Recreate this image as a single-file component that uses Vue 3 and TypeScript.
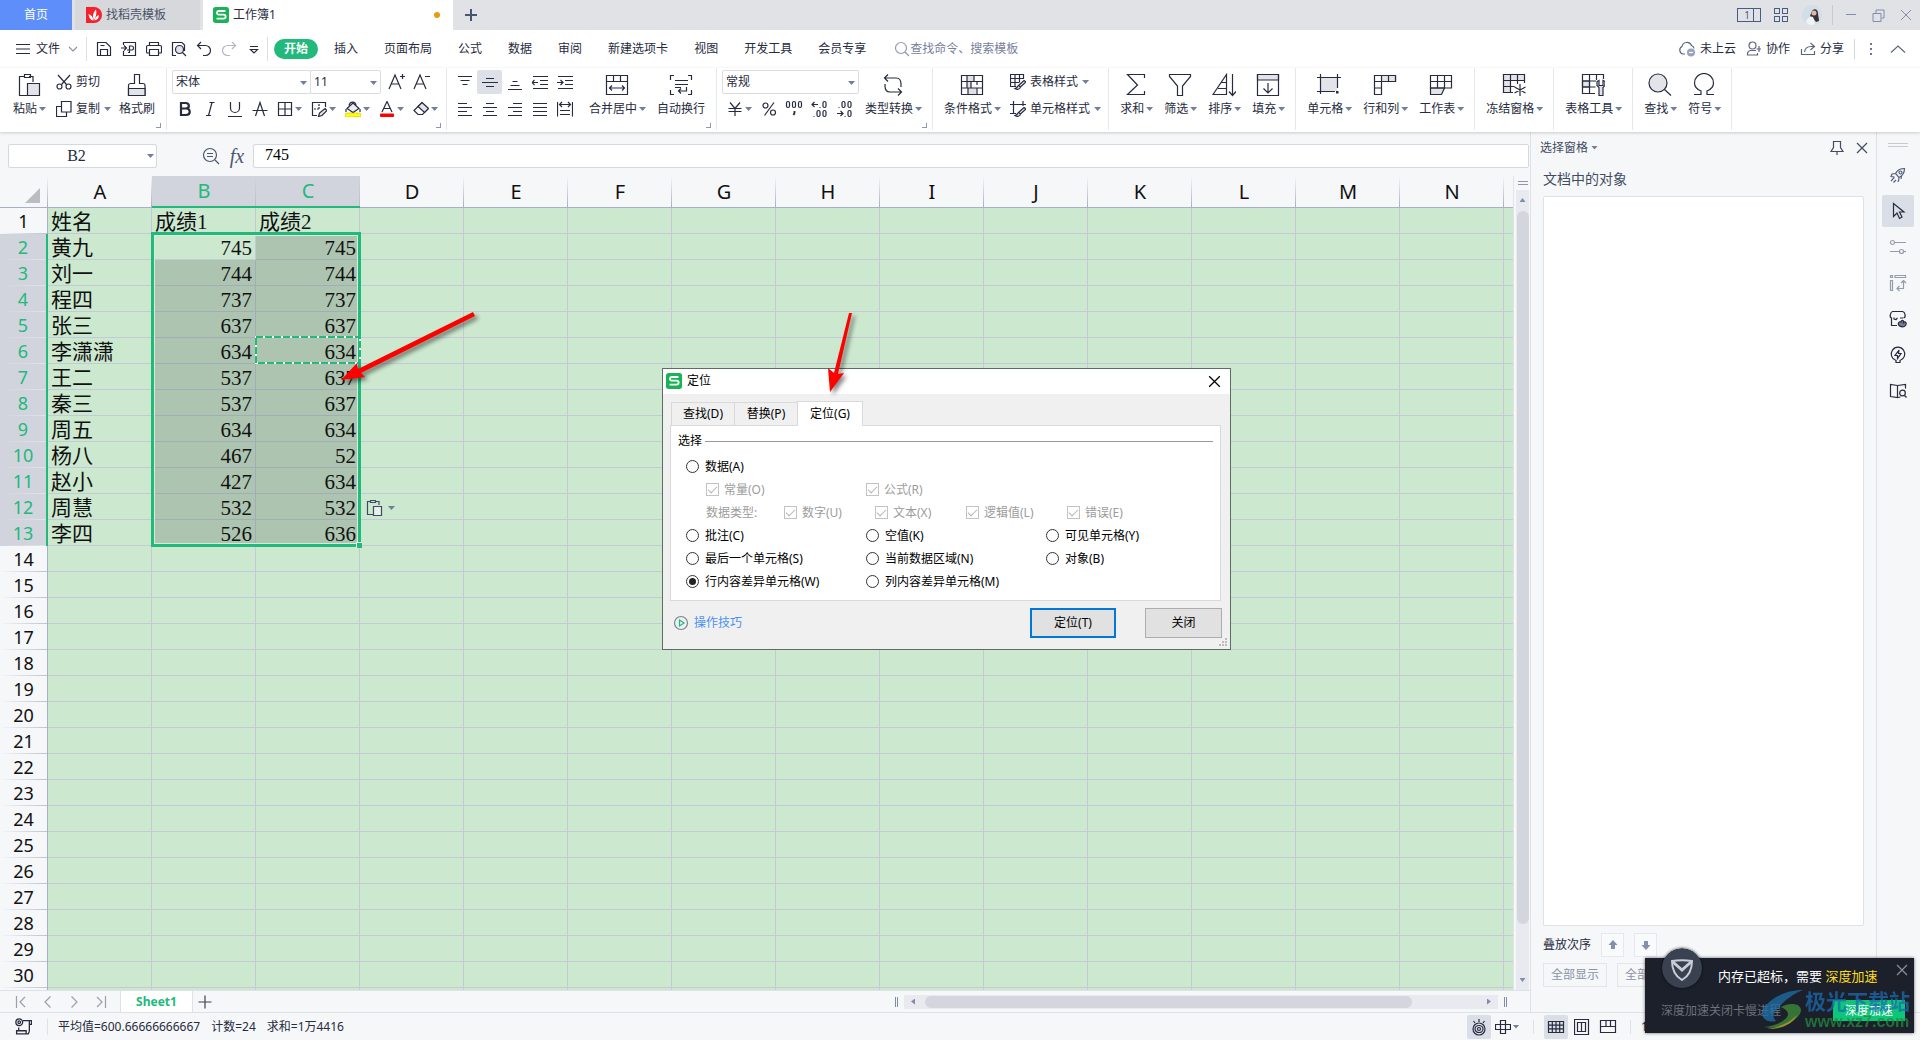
<script setup lang="ts">
import { h, ref } from 'vue'

const icons: Record<string, [number, string]> = {
  menu: [16, '<path d="M1 3.5h14M1 8h14M1 12.5h14"/>'],
  chev: [10, '<path d="M1 3l4 4 4-4"/>'],
  save: [16, '<path d="M1.5 1.500h8.500l4.500 4.500v8.500h-13z"/><path d="M4.500 14.500V8.500h7v6M4.500 4.500h4"/>'],
  exportPdf: [16, '<path d="M2.500 4V1.500h12v13h-12V10M0 7h5M3 4.500L5.500 7 3 9.500M7 11.500h1.500V5h2.500c2 0 2 4 0 4H6"/>'],
  print: [16, '<path d="M3.500 4.500v-3h9v3M3.500 12h-2a1 1 0 0 1-1-1V6a1.500 1.500 0 0 1 1.500-1.500h12A1.500 1.500 0 0 1 15.500 6v5a1 1 0 0 1-1 1h-2M3.500 8.500h9v6h-9z"/>'],
  preview: [16, '<path d="M5 14.500H1.500v-13h9.500l2.500 2.500v6"/><circle cx="8.500" cy="8.500" r="4" fill="#e2e4ea"/><path d="M11.500 11.500l3.500 3.500"/>'],
  undo: [16, '<path d="M5 1L1.500 4.500 5 8M2 4.500h7.500a4.500 4.500 0 0 1 0 10H7"/>'],
  redo: [16, '<path d="M11 1l3.500 3.500L11 8M14 4.500H6.500a4.500 4.500 0 0 0 0 10H9" stroke="#b4b8c4"/>'],
  more: [16, '<path d="M4 5.500h8M4.500 8.500L8 12l3.500-3.500z"/>'],
  search: [16, '<circle cx="7" cy="7" r="5.500"/><path d="M11 11l4 4"/>'],
  cloud: [18, '<path d="M7 14H5A4 4 0 0 1 4 6.500a5 5 0 0 1 9.500-1 4 4 0 0 1 2.500 3"/><circle cx="13" cy="12.500" r="4" fill="#98a3bd" stroke="none"/><path d="M11 12.500h4" stroke="#fff"/>'],
  person: [16, '<circle cx="6.500" cy="4.500" r="3.500"/><path d="M10 9.500H5a3.500 3.500 0 0 0-3.500 3v1.500h10v-2M13 5v6M10.500 8H15"/>'],
  share: [16, '<path d="M1.500 8v5.500h13V10M10.500 2l4 3.500-4 3.500M14 5.500h-3C7 5.500 5 7.500 4.500 11"/>'],
  up: [16, '<path d="M1 11.500l7-6.500 7 6.500"/>'],
  dots: [16, '<path d="M7 2h2v2H7zM7 7h2v2H7zM7 12h2v2H7z" fill="#6b7690" stroke="none"/>'],
  paste: [24, '<path d="M8 3.500H2.500v19H10M16 9V3.500h-4"/><path d="M7.500 1.500h6v3h-6z"/><path d="M10.500 10.500h12v12h-12z" fill="#e2e4e9"/>'],
  pasteOpt: [18, '<path d="M6 2.500H2.500v13H8M14 6V2.500h-3.500M5.500 1.500h5v2h-5z"/><path d="M8.500 7.500h8v9h-8z" fill="#e6f2e8"/>'],
  cut: [16, '<path d="M2 1l8.500 9.500M14 1L5.500 10.500"/><circle cx="3.500" cy="12.500" r="2.500"/><circle cx="12.500" cy="12.500" r="2.500"/>'],
  copy: [16, '<path d="M5 5.500H.500v10h10V11"/><path d="M5.500.500h9.500v10.500H5.500z"/>'],
  brush: [24, '<path d="M9.500 10.500v-9h5v9h3.500a2 2 0 0 1 2 2v10H3.500v-10a2 2 0 0 1 2-2z"/><path d="M3.500 15.500H20v7H3.500z" fill="#e2e4e9"/>'],
  fontUp: [18, '<path d="M1 16L7 2l6 14M3.500 11h7M12 3.500h5M14.500 1v5"/>'],
  fontDown: [18, '<path d="M1 16L7 2l6 14M3.500 11h7M12 3.500h5"/>'],
  bold: [16, '<path d="M4 2h4.500c4.500 0 4.500 5.500 0 5.500H4zM4 7.500h5c5 0 5 6.500 0 6.500H4z" stroke-width="2.200"/>'],
  italic: [16, '<path d="M7.500 1.500h5M4 14.500h5M10 1.500l-3.500 13"/>'],
  underline: [16, '<path d="M3.500 1v6a4.500 4.500 0 0 0 9 0V1M1 15.500h14"/>'],
  strike: [16, '<path d="M3.500 15L8 1.500 12.500 15M.500 9.500h15"/>'],
  border: [16, '<path d="M1.500 1.500h13v13h-13zM8 1.500v13M1.500 8h13"/>'],
  cellStyle: [16, '<path d="M6 14.500H1.500v-13h13V6"/><path d="M3 8h6M8 3v6" stroke-dasharray="2 1"/><path d="M14 7.500l2 2-5 5-3.500 1 1-3.500z" fill="#e2e4e9"/>'],
  fill: [16, '<path d="M2 7.500L8 2l6 5.500-6 4z" fill="#eceef2"/><path d="M4 4.500C5 0 10 0 11 4"/><path d="M1 8v3M15 8v3"/><rect x="0" y="12" width="16" height="4" rx="1.500" fill="#ff0" stroke="#b9a800" stroke-width=".5"/>'],
  fontColor: [16, '<path d="M3 11L8 .500 13 11M5 7.500h6"/><rect x="1" y="12.500" width="14" height="3.500" rx="1" fill="#f00" stroke="none"/>'],
  eraser: [16, '<path d="M1 9.500L9 1.500l6.500 6-6 6H5z"/><path d="M5 5.500L9 1.500l6.500 6-4 4z" fill="#e2e4e9"/>'],
  alTop: [16, '<path d="M1 2.500h14M3.500 6.500h9M5.500 10.500h5"/>'],
  alMid: [16, '<path d="M4 4.500h8M0 8.500h16M4 12.500h8"/>'],
  alBot: [16, '<path d="M5.500 7.500h5M3.500 11.500h9M1 15.500h14"/>'],
  outdent: [16, '<path d="M1 2.500h15M8 6.500h8M8 10.500h8M1 14.500h15M0 8.500h6M2.500 6L0 8.500 2.500 11"/>'],
  indent: [16, '<path d="M1 2.500h15M8 6.500h8M8 10.500h8M1 14.500h15M0 8.500h6M3.500 6L6 8.500 3.500 11"/>'],
  left: [16, '<path d="M1 2.500h9M1 6.500h14M1 10.500h9M1 14.500h14"/>'],
  center: [16, '<path d="M4 2.500h8M1 6.500h14M4 10.500h8M1 14.500h14"/>'],
  right: [16, '<path d="M6 2.500h9M1 6.500h14M6 10.500h9M1 14.500h14"/>'],
  justify: [16, '<path d="M1 2.500h14M1 6.500h14M1 10.500h14M1 14.500h14"/>'],
  distribute: [16, '<path d="M.500 1v14.500M15.500 1v14.500M3 3.500h10M5 1L2.500 3.500 5 6M11 1l2.500 2.500L11 6M3 9.500h10M3 13.500h10"/>'],
  merge: [24, '<path d="M1.500 2.500h21v19h-21zM1.500 8.500h21M8.500 2.500v6M15.500 2.500v6M4.500 15h15M7 12.500L4.500 15 7 17.500M17 12.500l2.500 2.500-2.500 2.500"/>'],
  wrap: [24, '<path d="M5 2.500H1.500V7M19 2.500h3.500V7M5 21.500H1.500V17M19 21.500h3.500V17M6 7.500h13M6 11.500h13M6 14.500h6M17.500 14v4h-8M12 15.500L9.500 18l2.500 2.500"/>'],
  yen: [16, '<path d="M3 1.500L8 7.500l5-6M1.500 7.500h13M1.500 10.500h13M8 7.500V15"/>'],
  percent: [16, '<circle cx="4.500" cy="4.500" r="2.500"/><circle cx="12" cy="11.500" r="2.500"/><path d="M13 1.500L3.500 14.500"/>'],
  thousand: [18, '<rect x="1.500" y="1.500" width="3" height="6" rx="1.500"/><rect x="7.500" y="1.500" width="3" height="6" rx="1.500"/><rect x="13.500" y="1.500" width="3" height="6" rx="1.500"/><path d="M9.500 11v2l-1 2" stroke-width="1.800"/>'],
  decUp: [18, '<path d="M2 4.500h6M4.500 2L2 4.500 4.500 7M9.500 7.500h1M3.500 16.500h1"/><rect x="13" y="1.500" width="3" height="6" rx="1.500"/><rect x="7" y="10.500" width="3" height="6" rx="1.500"/><rect x="13" y="10.500" width="3" height="6" rx="1.500"/>'],
  decDown: [18, '<path d="M2 13.500h6M5.500 11L8 13.500 5.500 16M9.500 16.500h1M3.500 7.500h1"/><rect x="7" y="1.500" width="3" height="6" rx="1.500"/><rect x="13" y="1.500" width="3" height="6" rx="1.500"/><rect x="13" y="10.500" width="3" height="6" rx="1.500"/>'],
  convert: [24, '<path d="M7 1.500L3.500 5 7 8.500M4 5h11c4 0 5 3 5 6v3M17 15.500l3.500 3.500-3.500 3.500M20 19H9c-4 0-5-3-5-6v-2"/>'],
  cond: [24, '<path d="M7 2.500h7v6H7zM7 8.500h4v6H7zM8 15h8v6.500H8z" fill="#dfe1e6" stroke="none"/><path d="M1.500 2.500h21v19h-21zM1.500 8.500h21M1.500 15h21M7 2.500V15M14 2.500v6M11 8.500V15M17 15v6.500M8 15v6.500M17 8.500V12"/>'],
  tableStyle: [16, '<path d="M6 12.500H.500v-12h13V5M.500 4.500h13M.500 8.500H9M5 .500v12M9.500.500v8"/><path d="M14 6.500l2 1.500-5.500 5-2-1.500zM9 11.500c-2 0-1 2.500-4 3 2 1.500 5 1 5.500-1.500" fill="#e2e4e9"/>'],
  unitStyle: [16, '<path d="M0 3.500h16M3.500 0v13M0 12.500h6M13 0v5"/><path d="M14 6.500l2 1.500-5.500 5-2-1.500zM9 11.500c-2 0-1 2.500-4 3 2 1.500 5 1 5.500-1.500" fill="#e2e4e9"/>'],
  sum: [24, '<path d="M20.500 5V1.500h-17L13.500 12 3.500 21.500h17V18"/>'],
  filter: [24, '<path d="M1.500 1.500h21v2L14.500 13v9.500h-5V13L1.500 3.500z"/>'],
  sort: [24, '<path d="M1 21.500L14.500 1.500v20zM9 9.500h5.500M6 15.500h8.500M20.500 1v21M17 18.500l3.500 4 3.500-4"/>'],
  fillDown: [24, '<path d="M1.500 1.500h21V7h-21z" fill="#e2e4e9"/><path d="M1.500 1.500h21v21h-21zM12 10v10M7.500 15.500L12 20l4.500-4.500"/>'],
  cell: [24, '<path d="M4 5h16v13H4z" fill="#e2e4e9" stroke="none"/><path d="M0 4.500h24M0 18.500h18M3.500 1v20M20.500 1v14"/><path d="M19 18h2.500v2.500H19z" fill="#262b40" stroke="none"/>'],
  rowcol: [24, '<path d="M1.500 2.500h21v6H8.500v13h-7z" /><path d="M8.500 2.500h14v6h-14z" fill="#e2e4e9"/><path d="M1.500 8.500h7M1.500 15h7M15.500 2.500v6"/>'],
  sheet: [24, '<path d="M1.500 15h14l-3 6.500h-11z" fill="#e2e4e9"/><path d="M1.500 2.500h21V15h-21zM1.500 8.500h21M8.500 2.500V15M15.500 2.500V15"/>'],
  freeze: [24, '<path d="M1.500 1.500h21v6H8.500v12h-7z" fill="#e2e4e9"/><path d="M1.500 7.500h21M1.500 13.500h7M8.500 1.500v6M15.500 1.500v6M22.500 7.500V10M15.500 7.500V11M8.500 13.500h4M1.500 19.500H11M18 11v12M12.500 14l11 6M23.500 14l-11 6"/>'],
  tools: [24, '<path d="M1.500 8h7v6h-7z" fill="#e2e4e9"/><path d="M14 20.500H1.500v-19h21V6M1.500 8H15M1.500 14h13M8.500 1.500v19M15.500 1.500V7"/><path d="M16 8.500v4l2 2v8h4v-8l2-2v-4l-2-1v5h-4v-5z" fill="#e2e4e9"/>'],
  find: [24, '<circle cx="10" cy="10" r="9" fill="#e2e4e9"/><path d="M16.500 16.500l6.500 6"/>'],
  omega: [24, '<path d="M2 21.500h7V18C4 16 2.500 13 2.500 10a9.500 9.500 0 0 1 19 0c0 3-1.500 6-6.500 8v3.500h7"/>'],
  zoomOut: [18, '<circle cx="8" cy="8" r="6.500"/><path d="M5 6.500h6M5 9.500h6M13 13l4 4"/>'],
  pin: [16, '<path d="M4.500 1.500h7v6l2.500 4H2l2.500-4zM8 11.500V15"/>'],
  close: [16, '<path d="M3 3l10 10M13 3L3 13"/>'],
  rocket: [18, '<path d="M15.500 2.500c-5 0-7.500 2-9 5l3.500 4c4-2 5.500-4.500 5.500-9zM6.500 7.500L3 8l-1 2.500 3.500.5M10 11.500l-.500 3.500-1 .500M12 13l.500-3M4 13l-2 2M7 14l-2.500 2.500M5.500 11.500L3.500 13"/><circle cx="11.500" cy="6.500" r="1.500"/>'],
  pointer: [18, '<path d="M4.500 1.500v13l3.500-3.500 2.500 5.500 2.500-1.500-2.500-5h4.500z"/>'],
  sliders: [18, '<circle cx="3.500" cy="4.500" r="2"/><path d="M5.500 4.500H17M1 13.500h9.500"/><circle cx="12.500" cy="13.500" r="2"/><path d="M14.500 13.500H17"/>'],
  swap: [18, '<path d="M1.500 1.500h2v2h-2zM6 1.500h10.500v2H6zM1.500 6.500h2v10h-2zM14.500 6.500v8H8M12 9l2.500-2.500L17 9M10.500 12L8 14.500l2.500 2.500"/>'],
  shop: [18, '<path d="M8 15.500H2.500V8C0 7 1.500 2 3.500 1.500h10c2.500.500 4 5.500 1 6.500M5 7.500V9l2 .500L8.500 8M11 8h3"/><path d="M10 15.500c-2-2.500 1-5 2-3 0-3 3-3 2.500 0 2-2 3.500 1 2 3s-5 1.500-6.500 0z" fill="#777d8e"/>'],
  bulb: [18, '<path d="M7 14.500A6.800 6.800 0 1 1 11 14.500v2H7z"/><path d="M10 4L6 9.500h2.500v3l3.500-5H9.500z"/>'],
  book: [18, '<path d="M8.500 3.500L1.500 2.500v12l7 1zM8.500 3.500l8-1v4M8.500 15.500l3-.500"/><circle cx="13.500" cy="11" r="2.800"/><path d="M15.500 13.500l2 2"/>'],
  first: [14, '<path d="M1.500 1v12M10 2L5 7l5 5"/>'],
  prev: [14, '<path d="M9.500 1.500L4 7l5.500 5.500"/>'],
  next: [14, '<path d="M4.500 1.500L10 7l-5.500 5.500"/>'],
  last: [14, '<path d="M12.500 1v12M4 2l5 5-5 5"/>'],
  plus: [14, '<path d="M7 .500v13M.500 7h13"/>'],
  newTab: [14, '<path d="M7 1v12M1 7h12" stroke-width="2"/>'],
  macro: [16, '<circle cx="4" cy="4" r="3.200"/><circle cx="4" cy="4" r="1.200"/><path d="M7.500 2.500h8V6H13M13.500 2.500v10M3.500 9v2.500M1.500 12h9v3h-9zM10.500 15h2l1-2.500"/>'],
  eye: [18, '<path d="M9 1v3M3.500 3l1.500 2M14.500 3L13 5"/><circle cx="9" cy="11" r="6"/><ellipse cx="9" cy="11" rx="4" ry="3.500"/><circle cx="9" cy="11" r="1.500"/>'],
  cross: [16, '<path d="M5.500 1.500h5v13h-5zM.500 5.500h15v5H.500z"/>'],
  vGrid: [18, '<path d="M1.500 3.500h15v11h-15zM1.500 7.200h15M1.500 10.800h15M5.300 3.500v11M9 3.500v11M12.700 3.500v11"/>'],
  vPage: [16, '<path d="M.500.500h14v15H.500zM3.500 3.500h8v9h-8zM7.500 3.500v9"/>'],
  vBreak: [18, '<path d="M1.500 2.500h15v12h-15zM7 2.500v6h9.500M11.500 2.500v6M1.500 8.500H7"/>'],
  arrowUp: [12, '<path d="M6 1l4.500 5H8v4H4V6H1.500z" fill="#8590ac" stroke="none"/>'],
  arrowDown: [12, '<path d="M6 11l4.500-5H8V2H4v4H1.500z" fill="#8590ac" stroke="none"/>'],
  play: [16, '<circle cx="8" cy="8" r="6.500" stroke="#7b8493"/><path d="M6.500 5l4.500 3-4.500 3z" stroke="#1fb97b"/>'],
  logo: [18, '<rect x="0" y="0" width="18" height="18" rx="3" fill="#17b355" stroke="none"/><path d="M14 4.500H6A1.800 1.800 0 0 0 4.500 6.200 1.800 1.800 0 0 0 6 8.500h6a2 2 0 0 1 0 4.500H4" stroke="#fff" stroke-width="2"/>'],
  daoke: [16, '<path d="M0 0h8a8 8 0 0 1 0 16H0z" fill="#f5222d" stroke="none"/><path d="M8 13C6 9 7.500 5 10 2.500c1 4 0 7-2 10.500zM7.500 13.500C4 13 3 10 2.500 7c3 1 4.500 3 5 6.500zM8.500 13.500c.500-3 2-4.500 4.500-5.500 0 3-1.500 5-4.500 5.500z" fill="#fff" stroke="none"/>'],
}

const Icon = (p: { name: string; size?: number }) => {
  const [box, body] = icons[p.name]
  const s = p.size ?? box
  return h('svg', { class: 'icon', width: s, height: s, viewBox: `0 0 ${box} ${box}`, fill: 'none', stroke: 'currentColor', 'stroke-width': 1.2, 'aria-hidden': 'true', innerHTML: body })
}
Icon.props = ['name', 'size']

const quick = ['save', 'exportPdf', 'print', 'preview', 'undo', 'redo', 'more']
const menus = ['开始', '插入', '页面布局', '公式', '数据', '审阅', '新建选项卡', '视图', '开发工具', '会员专享']
const fontTools = ['bold', 'italic', 'underline', 'strike']
const fontMenus = ['border', 'cellStyle', 'fill', 'fontColor', 'eraser']
const alignTop = ['alTop', 'alMid', 'alBot', 'outdent', 'indent']
const alignLow = ['left', 'center', 'right', 'justify', 'distribute']
const numTools = ['percent', 'thousand', 'decUp', 'decDown']
const tailGroups = [
  [['sum', '求和'], ['filter', '筛选'], ['sort', '排序'], ['fillDown', '填充']],
  [['cell', '单元格'], ['rowcol', '行和列'], ['sheet', '工作表']],
  [['freeze', '冻结窗格']],
  [['tools', '表格工具']],
  [['find', '查找'], ['omega', '符号']],
]
const sideTools = ['rocket', 'pointer', 'sliders', 'swap', 'shop', 'bulb', 'book']

const columns = 'ABCDEFGHIJKLMN'.split('')
const rowCount = 30
const records: string[][] = [
  ['姓名', '成绩1', '成绩2'],
  ['黄九', '745', '745'],
  ['刘一', '744', '744'],
  ['程四', '737', '737'],
  ['张三', '637', '637'],
  ['李潇潇', '634', '634'],
  ['王二', '537', '637'],
  ['秦三', '537', '637'],
  ['周五', '634', '634'],
  ['杨八', '467', '52'],
  ['赵小', '427', '634'],
  ['周慧', '532', '532'],
  ['李四', '526', '636'],
]
const inRange = (r: number, c: number) => r >= 2 && r <= 13 && (c === 1 || c === 2)
const value = (r: number, c: number) => records[r - 1]?.[c] ?? ''

const formula = ref('745')
const nameBox = ref('B2')
const target = ref('W')
const tabs = [['D', '查找(D)'], ['P', '替换(P)'], ['G', '定位(G)']]
const targetRows = [
  [['C', '批注(C)'], ['K', '空值(K)'], ['Y', '可见单元格(Y)']],
  [['S', '最后一个单元格(S)'], ['N', '当前数据区域(N)'], ['B', '对象(B)']],
  [['W', '行内容差异单元格(W)'], ['M', '列内容差异单元格(M)']],
]
</script>

<template>
  <div class="app">
    <header class="titlebar">
      <button class="home">首页</button>
      <button class="doc-tab"><Icon name="daoke" />找稻壳模板</button>
      <button class="doc-tab active"><Icon name="logo" :size="16" />工作簿1<i class="dot"></i></button>
      <button class="new-tab" aria-label="新建"><Icon name="newTab" /></button>
      <div class="win">
        <button class="pages" aria-label="窗口"><span>1</span><i></i></button>
        <button class="apps" aria-label="应用"><i v-for="n in 4" :key="n"></i></button>
        <svg class="avatar" width="20" height="20" viewBox="0 0 20 20">
          <circle cx="10" cy="10" r="10" fill="#cfdfe5" />
          <path d="M10 6c2-3 6-2 6 2 0 3 1 5 1 8l-3 1-3-4-3-2z" fill="#3a2f3a" />
          <circle cx="12" cy="8" r="2.500" fill="#e3b7a8" />
          <path d="M4 17c1-4 4-6 7-5l2 7c-3 2-7 1-9-2z" fill="#eef4f6" />
        </svg>
        <i class="bar"></i>
        <button aria-label="最小化"><svg width="12" height="12" class="wi"><path d="M1 5.500h10" /></svg></button>
        <button aria-label="还原"><svg width="13" height="13" class="wi"><path d="M1 4.500h8v8H1zM4 4V1h8v8H9.500" /></svg></button>
        <button aria-label="关闭"><svg width="12" height="12" class="wi"><path d="M1 1l10 10M11 1L1 11" /></svg></button>
      </div>
    </header>

    <nav class="menubar">
      <button class="file"><Icon name="menu" /><span>文件</span><Icon name="chev" /></button>
      <div class="quick">
        <button v-for="q in quick" :key="q" :aria-label="q"><Icon :name="q" /></button>
      </div>
      <div class="menus">
        <button v-for="(m, i) in menus" :key="m" :class="{ on: i === 0 }">{{ m }}</button>
      </div>
      <label class="search"><Icon name="search" /><input type="text" placeholder="查找命令、搜索模板" aria-label="查找命令" /></label>
      <div class="account">
        <button><Icon name="cloud" />未上云</button>
        <button><Icon name="person" />协作</button>
        <button><Icon name="share" />分享</button>
        <i class="bar"></i>
        <button aria-label="更多"><Icon name="dots" /></button>
        <button aria-label="收起"><Icon name="up" /></button>
      </div>
    </nav>

    <section class="ribbon">
      <div class="group first">
        <button class="big"><Icon name="paste" /><span>粘贴<i class="caret"></i></span></button>
        <div class="stack">
          <button class="small"><Icon name="cut" />剪切</button>
          <button class="small"><Icon name="copy" />复制<i class="caret"></i></button>
        </div>
        <button class="big"><Icon name="brush" /><span>格式刷</span></button>
        <i class="launch"></i>
      </div>
      <div class="group fonts">
        <div class="stack">
          <div class="line">
            <div class="pick font"><select aria-label="字体"><option>宋体</option></select><i class="caret"></i></div>
            <div class="pick size"><select aria-label="字号"><option>11</option></select><i class="caret"></i></div>
            <button class="tool" aria-label="增大字号"><Icon name="fontUp" /></button>
            <button class="tool" aria-label="减小字号"><Icon name="fontDown" /></button>
          </div>
          <div class="line">
            <button v-for="t in fontTools" :key="t" class="tool" :aria-label="t"><Icon :name="t" /></button>
            <button v-for="t in fontMenus" :key="t" class="tool drop" :aria-label="t"><Icon :name="t" /><i class="caret"></i></button>
          </div>
        </div>
        <i class="launch"></i>
      </div>
      <div class="group">
        <div class="stack aligns">
          <div class="line"><button v-for="t in alignTop" :key="t" class="tool" :class="{ pressed: t === 'alMid' }" :aria-label="t"><Icon :name="t" /></button></div>
          <div class="line"><button v-for="t in alignLow" :key="t" class="tool" :aria-label="t"><Icon :name="t" /></button></div>
        </div>
        <button class="big"><Icon name="merge" /><span>合并居中<i class="caret"></i></span></button>
        <button class="big"><Icon name="wrap" /><span>自动换行</span></button>
        <i class="launch"></i>
      </div>
      <div class="group">
        <div class="stack">
          <div class="pick format"><select aria-label="数字格式"><option>常规</option></select><i class="caret"></i></div>
          <div class="line">
            <button class="tool drop" aria-label="货币"><Icon name="yen" /><i class="caret"></i></button>
            <button v-for="t in numTools" :key="t" class="tool" :aria-label="t"><Icon :name="t" /></button>
          </div>
        </div>
        <button class="big"><Icon name="convert" /><span>类型转换<i class="caret"></i></span></button>
        <i class="launch"></i>
      </div>
      <div class="group">
        <button class="big"><Icon name="cond" /><span>条件格式<i class="caret"></i></span></button>
        <div class="stack">
          <button class="small"><Icon name="tableStyle" />表格样式<i class="caret"></i></button>
          <button class="small"><Icon name="unitStyle" />单元格样式<i class="caret"></i></button>
        </div>
      </div>
      <div v-for="(g, i) in tailGroups" :key="i" class="group">
        <button v-for="b in g" :key="b[1]" class="big"><Icon :name="b[0]" /><span>{{ b[1] }}<i class="caret"></i></span></button>
      </div>
    </section>

    <div class="body">
      <main class="work">
        <div class="formula">
          <div class="name"><input v-model="nameBox" aria-label="名称框" /><i class="caret"></i></div>
          <button class="lens" aria-label="缩小"><Icon name="zoomOut" /></button>
          <button class="fx" aria-label="插入函数">fx</button>
          <input v-model="formula" class="expr" aria-label="编辑栏" />
        </div>

        <div class="sheet-area">
          <div class="sheet">
            <table>
              <colgroup><col class="c-head" /><col v-for="c in columns" :key="c" class="c-data" /><col /></colgroup>
              <thead>
                <tr>
                  <th class="corner"><i></i></th>
                  <th v-for="(c, i) in columns" :key="c" :class="{ sel: i === 1 || i === 2 }">{{ c }}</th>
                  <th class="rest"></th>
                </tr>
              </thead>
              <tbody>
                <tr v-for="r in rowCount" :key="r">
                  <th :class="{ sel: r >= 2 && r <= 13 }">{{ r }}</th>
                  <td v-for="(c, i) in columns" :key="c" :class="{ num: r > 1 && i > 0, shade: inRange(r, i) && !(r === 2 && i === 1) }">{{ value(r, i) }}</td>
                  <td class="rest"></td>
                </tr>
                <tr>
                  <th></th>
                  <td v-for="c in columns" :key="c"></td>
                  <td class="rest"></td>
                </tr>
              </tbody>
            </table>
            <div class="range"><i></i></div>
            <svg class="ants" width="106" height="28" fill="none" stroke-width="2">
              <path d="M1 1h104v26H1z" stroke="#fff" />
              <path d="M1 1h104v26H1z" stroke="#21b97c" stroke-dasharray="7 2" />
            </svg>
            <button class="paste-opt" aria-label="粘贴选项"><Icon name="pasteOpt" /><i class="caret"></i></button>
          </div>
          <div class="vscroll">
            <i class="split"></i>
            <div class="track"><i class="tri t-up"></i><i class="thumb"></i><i class="tri t-down"></i></div>
          </div>
        </div>

        <div class="sheetbar">
          <div class="navs">
            <button aria-label="第一张"><Icon name="first" /></button>
            <button aria-label="上一张"><Icon name="prev" /></button>
            <button aria-label="下一张"><Icon name="next" /></button>
            <button aria-label="最后一张"><Icon name="last" /></button>
          </div>
          <button class="sheet-tab">Sheet1</button>
          <button class="add" aria-label="新建工作表"><Icon name="plus" /></button>
          <div class="hscroll">
            <i class="grip"></i>
            <div class="htrack"><i class="tri t-left"></i><i class="hthumb"></i><i class="tri t-right"></i></div>
            <i class="grip"></i>
          </div>
        </div>
      </main>

      <aside class="pane">
        <div class="pane-head">
          <button>选择窗格<i class="caret"></i></button>
          <button class="pin" aria-label="固定"><Icon name="pin" /></button>
          <button aria-label="关闭窗格"><Icon name="close" /></button>
        </div>
        <h2>文档中的对象</h2>
        <div class="objects"></div>
        <div class="order"><span>叠放次序</span><button aria-label="上移"><Icon name="arrowUp" /></button><button aria-label="下移"><Icon name="arrowDown" /></button></div>
        <div class="shows"><button>全部显示</button><button>全部隐藏</button></div>
      </aside>

      <aside class="rail">
        <i class="rail-grip"></i>
        <button v-for="t in sideTools" :key="t" :class="[t, { on: t === 'pointer' }]" :aria-label="t"><Icon :name="t" /></button>
      </aside>
    </div>

    <footer class="status">
      <Icon name="macro" :size="17" />
      <p><span>平均值=600.66666666667</span><span>计数=24</span><span>求和=1万4416</span></p>
      <div class="views">
        <button class="on eye" aria-label="护眼模式"><Icon name="eye" /></button>
        <button class="cross" aria-label="阅读模式"><Icon name="cross" /><i class="caret"></i></button>
        <i class="bar"></i>
        <button class="on" aria-label="普通视图"><Icon name="vGrid" /></button>
        <button aria-label="页面布局"><Icon name="vPage" /></button>
        <button aria-label="分页预览"><Icon name="vBreak" /></button>
        <i class="bar after"></i>
        <span>100%</span>
      </div>
    </footer>

    <section class="dialog" role="dialog" aria-label="定位">
      <header><Icon name="logo" :size="16" /><h3>定位</h3><button aria-label="关闭"><Icon name="close" :size="17" /></button></header>
      <div class="tabs"><button v-for="t in tabs" :key="t[0]" :class="{ on: t[0] === 'G' }">{{ t[1] }}</button></div>
      <form class="page" @submit.prevent>
        <div class="legend"><span>选择</span><i></i></div>
        <div class="row"><label><input v-model="target" type="radio" value="A" />数据(A)</label></div>
        <div class="row sub">
          <label class="w-const"><input type="checkbox" checked disabled />常量(O)</label>
          <label><input type="checkbox" checked disabled />公式(R)</label>
        </div>
        <div class="row sub types">
          <span>数据类型:</span>
          <label><input type="checkbox" checked disabled />数字(U)</label>
          <label><input type="checkbox" checked disabled />文本(X)</label>
          <label class="w-logic"><input type="checkbox" checked disabled />逻辑值(L)</label>
          <label><input type="checkbox" checked disabled />错误(E)</label>
        </div>
        <div v-for="(row, i) in targetRows" :key="i" class="row">
          <label v-for="t in row" :key="t[0]"><input v-model="target" type="radio" :value="t[0]" />{{ t[1] }}</label>
        </div>
      </form>
      <div class="actions">
        <a href="#"><Icon name="play" />操作技巧</a>
        <button class="primary">定位(T)</button>
        <button>关闭</button>
      </div>
      <svg class="resize" width="9" height="9" fill="#bdbdbd"><path d="M6 0h2v2H6zM6 3h2v2H6zM3 3h2v2H3zM6 6h2v2H6zM3 6h2v2H3zM0 6h2v2H0z" /></svg>
    </section>

    <svg class="pointer-arrow a1" width="150" height="90" viewBox="336 304 150 90">
      <path d="M341 380L357 363 358 369 473 312 475 316 361 373 365 377z" fill="#f00" />
    </svg>
    <svg class="pointer-arrow a2" width="50" height="96" viewBox="816 304 50 96">
      <path d="M830 392L828 368 834 373 849 313 852 313 838 374 844 373z" fill="#f00" />
    </svg>

    <aside class="toast">
      <svg class="shield" width="40" height="40" viewBox="0 0 40 40">
        <circle cx="20" cy="20" r="20" fill="#3a4150" />
        <path d="M10 13c7-1 13-1 20 0 0 9-3 15-10 19C13 28 10 22 10 13z" fill="none" stroke="#c9cedb" stroke-width="2" />
        <path d="M11 14l9 8 9-8" fill="none" stroke="#c9cedb" stroke-width="3" />
      </svg>
      <p class="t-main">内存已超标，需要 <b>深度加速</b></p>
      <div class="t-foot"><span>深度加速关闭卡慢进程</span><button>深度加速</button></div>
      <button class="t-close" aria-label="关闭提示"><Icon name="close" /></button>
      <div class="mark">
        <svg width="44" height="42" viewBox="0 0 44 42">
          <path d="M42 1C22 1 4 12 1 24c0 6 6 10 14 8-4-4-3-8 3-14C24 11 32 5 42 1z" fill="#1e6fa8" />
          <path d="M20 18c8-5 20-4 20 3C40 30 20 42 3 38c12-1 24-7 24-13 0-3-3-5-7-7z" fill="#3f8f3a" />
          <path d="M2 40c14 0 26-6 34-14-4 9-16 15-34 14z" fill="#c9b52c" />
        </svg>
        <div><strong>极光下载站</strong><em>www.xz7.com</em></div>
      </div>
    </aside>
  </div>
</template>

<style>
body { margin: 0; overflow: hidden; }
.icon { display: block; flex: none; }
</style>

<style scoped>
.app { position: relative; display: flex; flex-direction: column; height: 100vh; overflow: hidden; background: #f5f7f9; color: #262b40; font: 12px/18px "Noto Sans", "Noto Sans CJK SC", sans-serif; }
.app * { box-sizing: border-box; }
button, input, select { font: inherit; color: inherit; border: 0; padding: 0; margin: 0; background: none; }
button { display: flex; align-items: center; justify-content: center; white-space: nowrap; }
.caret { display: block; flex: none; width: 7px; height: 4px; margin: 0 -1px 0 2px; background: #717e9c; clip-path: polygon(0 0, 100% 0, 50% 100%); }
.bar { width: 1px; height: 20px; background: #d3d6de; }

.titlebar { display: flex; height: 30px; flex: none; background: #e1e2e6; }
.home { width: 72px; margin-right: 3px; background: #5e8efa; color: #fff; }
.doc-tab { justify-content: flex-start; gap: 4px; width: 125px; padding-left: 11px; margin-right: 3px; background: #d7d8dc; color: #4a5268; }
.doc-tab.active { width: 250px; padding: 0 13px 0 10px; margin: 0; background: #fff; color: #262b40; }
.dot { width: 6px; height: 6px; margin-left: auto; border-radius: 3px; background: #e89b0c; }
.new-tab { width: 36px; color: #4a566f; }
.win { display: flex; align-items: center; margin-left: auto; padding-right: 8px; }
.pages { width: 24px; height: 14px; border: 1px solid #4a5b80; color: #4a5b80; font-size: 10px; line-height: 12px; gap: 3px; padding-left: 6px; margin-right: 13px; }
.pages i { width: 7px; height: 12px; border-left: 1px solid #4a5b80; }
.apps { display: grid; grid-template-columns: 6px 6px; gap: 2px; margin-right: 14px; }
.apps i { width: 6px; height: 6px; border: 1px solid #4a5b80; }
.avatar { margin-right: 10px; }
.win .bar { margin-right: 12px; background: #c8cad0; }
.wi { fill: none; stroke: #7f8db0; margin-right: 15px; }
.win button:last-child .wi { margin-right: 0; }

.menubar { display: flex; align-items: center; height: 38px; flex: none; padding: 0 14px 0 15px; background: #fff; }
.file { gap: 5px; padding-right: 8px; border-right: 1px solid #dcdfe6; height: 24px; }
.file .icon:last-child { margin-left: 3px; color: #8a91a3; }
.quick { display: flex; height: 24px; padding: 0 1px 0 4px; border-right: 1px solid #dcdfe6; }
.quick button { width: 25px; }
.menus { display: flex; gap: 6px; margin-left: 6px; }
.menus button { height: 20px; padding: 0 10px; }
.menus .on { border-radius: 10px; background: #21b97c; color: #fff; font-weight: 700; }
.search { display: flex; align-items: center; margin-left: 18px; color: #8e99b3; }
.search input { width: 130px; outline: 0; }
.search input::placeholder { color: #76819c; opacity: 1; }
.account { display: flex; align-items: center; margin-left: auto; }
.account button { gap: 4px; margin-right: 10px; }
.account .icon { color: #5b6680; }
.account .bar { margin-right: 8px; }
.account button:last-child { margin: 0 0 0 1px; }

.ribbon { position: relative; z-index: 1; display: flex; height: 64px; flex: none; background: #fff; box-shadow: 0 1px 3px #0000002e; }
.group { position: relative; display: flex; height: 62px; padding: 2px 5px 0; border-right: 1px solid #e6e8ed; }
.group.first { padding-left: 7px; }
.group.first .stack { margin-left: 1px; }
.group.fonts { padding-right: 4px; }
.big { flex-direction: column; justify-content: flex-start; gap: 3px; padding: 3px 6px 0; height: 52px; }
.big span { display: flex; align-items: center; }
.stack { display: flex; flex-direction: column; gap: 3px; }
.small { align-self: flex-start; gap: 4px; height: 24px; padding: 0 4px; }
.small .caret { margin-left: 0; margin-right: -2px; }
.line { display: flex; }
.tool { width: 25px; height: 24px; }
.drop { width: 34px; }
.pressed { background: #dde1e7; border-radius: 2px; }
.aligns { margin-right: 6px; }
.pick { position: relative; height: 24px; border: 1px solid #d9dce3; border-radius: 2px; }
.pick select { width: 100%; height: 22px; padding-left: 3px; appearance: none; outline: 0; }
.pick .caret, .name .caret { position: absolute; right: 4px; top: 10px; }
.font { width: 139px; }
.size { width: 71px; margin: 0 3px 0 -1px; }
.format { width: 137px; }
.launch { position: absolute; right: 5px; bottom: 2px; width: 5px; height: 5px; border: solid #8d97ad; border-width: 0 1px 1px 0; }

.body { display: flex; flex: 1; min-height: 0; }
.work { display: flex; flex-direction: column; flex: 1; min-width: 0; }
.formula { display: flex; height: 44px; flex: none; padding: 12px 1px 8px 8px; font-size: 16px; font-family: "Liberation Serif", "Noto Sans CJK SC", serif; }
.name { position: relative; width: 149px; }
.name input { width: 100%; height: 24px; padding-right: 12px; text-align: center; background: #fff; border: 1px solid #d5d8e0; border-radius: 2px; color: #262b40; }
.lens { width: 20px; margin-left: 44px; color: #4c5670; }
.fx { width: 32px; font-style: italic; font-size: 20px; color: #4c5670; }
.expr { flex: 1; min-width: 0; padding: 0 11px 2px; border: 1px solid #d5d8e0; border-radius: 2px; background: #fff; color: #000; outline: 0; }

.sheet-area { display: flex; flex: 1; min-height: 0; }
.sheet { position: relative; flex: 1; min-width: 0; overflow: hidden; background: #cce8cf; }
table { width: 100%; table-layout: fixed; border-spacing: 0; border-collapse: separate; }
.c-head { width: 48px; }
.c-data { width: 104px; }
th { height: 26px; padding: 0; font: 18px/25px "Noto Sans", sans-serif; color: #111; background: linear-gradient(90deg, #f5f7f9, #bcc2d0) 0 100% / 100% 1px no-repeat #f5f7f9; border-right: 1px solid #a8b0c6; }
tbody th.sel { color: #21b97c; background: linear-gradient(90deg, #d1d4dc, #e0e3ea) 0 100% / 100% 1px no-repeat #d1d4dc; border-right: 2px solid #21b97c; }
thead th { height: 32px; font-size: 20px; line-height: 30px; border-right: 0; border-bottom: 1px solid #a8b0c6; background: linear-gradient(#f5f7f9, #a8b0c6) 100% 0 / 1px 100% no-repeat #f5f7f9; }
thead th.sel { color: #21b97c; border-bottom: 2px solid #21b97c; background: linear-gradient(#d1d4dc, #b9bfcd) 100% 0 / 1px 100% no-repeat #d1d4dc; }
thead .rest { background: #f5f7f9; }
.corner i { display: block; width: 15px; height: 15px; margin: 8px 0 0 25px; background: #b9bcc2; clip-path: polygon(100% 0, 100% 100%, 0 100%); }
td { height: 26px; padding: 3px 3px 0; font: 21px/22px "Liberation Serif", "Noto Sans CJK SC", serif; color: #111; white-space: nowrap; overflow: hidden; border: solid #c3c9d7; border-width: 0 1px 1px 0; }
tbody td.rest { border-right: 0; padding: 0; }
td.num { text-align: right; }
td.shade { background: #adc4b0; border-color: #a4acb9; }
.range { position: absolute; left: 151px; top: 56px; width: 210px; height: 315px; border: 3px solid #21b97c; box-shadow: inset 0 0 0 1px #d5ecd8; }
.range i { position: absolute; right: -4px; bottom: -4px; width: 6px; height: 6px; background: #21b97c; border: solid #e8f5ea; border-width: 1px 0 0 1px; }
.ants { position: absolute; left: 255px; top: 160px; }
.paste-opt { position: absolute; left: 365px; top: 323px; color: #3f4b66; }
.paste-opt .caret { margin-left: 5px; }

.vscroll { width: 17px; padding: 5px 1px 0 2px; border-left: 1px solid #e0e3e9; display: flex; flex-direction: column; }
.split { height: 4px; margin: 0 1px 5px 2px; border: solid #8d97ad; border-width: 1px 0; }
.track { position: relative; flex: 1; display: flex; flex-direction: column; align-items: center; padding: 8px 0; background: #e9eaef; }
.tri { flex: none; width: 6px; height: 4px; background: #7f8cab; }
.t-up { clip-path: polygon(50% 0, 100% 100%, 0 100%); }
.t-down { clip-path: polygon(0 0, 100% 0, 50% 100%); margin-top: auto; }
.thumb { width: 12px; height: 91%; margin-top: 9px; border-radius: 6px; background: #d4d6de; }

.sheetbar { display: flex; height: 22px; flex: none; border-top: 1px solid #dfe1e8; }
.navs { display: flex; gap: 12px; width: 120px; padding-left: 15px; color: #9aa0ad; }
.sheet-tab { width: 73px; background: #fff; border: solid #dfe1e8; border-width: 0 1px; color: #21b97c; font-weight: 700; }
.add { width: 24px; color: #3a4258; }
.hscroll { display: flex; align-items: center; width: 612px; margin-left: auto; margin-right: 23px; gap: 6px; }
.grip { width: 3px; height: 10px; border: solid #7f8cab; border-width: 0 1px; }
.htrack { display: flex; align-items: center; flex: 1; height: 14px; padding: 0 7px; background: #e9eaef; }
.t-left { width: 4px; height: 6px; clip-path: polygon(100% 0, 100% 100%, 0 50%); }
.t-right { width: 4px; height: 6px; margin-left: auto; clip-path: polygon(0 0, 100% 50%, 0 100%); }
.hthumb { width: 84%; height: 12px; margin-left: 10px; border-radius: 6px; background: #d4d6de; }

.pane { display: flex; flex-direction: column; width: 346px; padding: 0 12px; border-left: 1px solid #dfe1e8; color: #434b60; }
.pane-head { display: flex; align-items: center; height: 31px; margin-left: -3px; }
.pane-head .pin { margin-left: auto; margin-right: 9px; }
.pane-head .caret { margin-left: 3px; }
.pane-head button:last-child { margin-right: -6px; }
h2 { margin: 6px 0 7px; font-size: 14px; line-height: 20px; font-weight: 400; }
.objects { flex: 1; background: #fff; border: 1px solid #dfe1e6; border-radius: 2px; width: 321px; }
.order { display: flex; align-items: center; gap: 10px; margin-top: 7px; color: #262b40; }
.order button { width: 23px; height: 24px; border: 1px solid #e6e8ed; background: #f9fafb; }
.shows { display: flex; gap: 10px; margin: 6px 0 25px; color: #8b93a7; }
.shows button { width: 64px; height: 24px; border: 1px solid #e3e5ea; }

.rail { display: flex; flex-direction: column; align-items: center; gap: 4px; width: 44px; padding-right: 1px; border-left: 1px solid #dfe1e8; color: #262b40; }
.rail-grip { width: 20px; height: 4px; margin: 11px 0 8px; border: solid #c6cad3; border-width: 1px 0; }
.rail button { width: 32px; height: 32px; border-radius: 2px; }
.rail .on { background: #dadee6; }
.rail .rocket { color: #55607c; }
.rail .sliders, .rail .swap { color: #959cae; }

.status { display: flex; align-items: center; height: 28px; flex: none; padding-left: 15px; border-top: 1px solid #dfe1e8; }
.status p { display: flex; gap: 11px; margin: 0 0 0 15px; padding-left: 10px; height: 16px; line-height: 16px; border-left: 1px solid #dfe1e8; }
.views { display: flex; align-items: center; width: 453px; margin-left: auto; }
.views button { width: 24px; height: 24px; border-radius: 2px; margin-right: 2px; }
.views .on { background: #dadee6; }
.views .cross { width: 27px; margin-right: 13px; }
.views .bar { height: 14px; margin-right: 10px; background: #dfe1e8; }
.views .bar.after { margin-left: 8px; }

.dialog { position: absolute; left: 662px; top: 368px; width: 569px; height: 282px; border: 1px solid #5f6b66; background: #f0f0f0; color: #000; }
.dialog header { display: flex; align-items: center; height: 25px; padding: 0 7px 1px 3px; gap: 5px; background: #fff; }
h3 { margin: 0; font-size: 12px; font-weight: 400; }
.dialog header button { margin-left: auto; }
.tabs { display: flex; align-items: flex-end; height: 31px; padding-left: 8px; }
.tabs button { width: 64px; height: 23px; margin-right: -1px; border: 1px solid #d9d9d9; border-bottom: 0; }
.tabs .on { position: relative; width: 66px; height: 25px; margin-bottom: -1px; background: #fff; }
.page { width: 551px; height: 176px; margin-left: 7px; padding: 6px 7px 0; background: #fff; border: 1px solid #d9d9d9; }
.legend { display: flex; align-items: center; gap: 3px; height: 18px; margin-bottom: 5px; }
.legend i { flex: 1; height: 1px; background: #999; }
.row { display: flex; height: 23px; padding-left: 8px; }
.row label { display: flex; flex: none; align-items: center; gap: 6px; width: 180px; }
.row input { flex: none; width: 13px; height: 13px; appearance: none; display: grid; place-items: center; }
.row input[type='radio'] { border: 1px solid #333; border-radius: 50%; background: #fff; }
.row input[type='radio']:checked::after { content: ''; width: 7px; height: 7px; border-radius: 50%; background: #222; }
.row input[type='checkbox'] { border: 1px solid #c3c3c3; }
.row input[type='checkbox']::after { content: ''; width: 8px; height: 4px; margin-bottom: 2px; border: solid #b5b5b5; border-width: 0 0 1px 1px; transform: rotate(-45deg); }
.row:nth-child(n+5) label + label + label { width: auto; }
.sub { padding-left: 28px; color: #9c9c9c; align-items: center; }
.row.sub label { gap: 5px; }
.sub .w-const { width: 160px; }
.types span { width: 78px; }
.row.types label { width: 91px; }
.row.types .w-logic { width: 101px; }
.actions { display: flex; align-items: center; padding: 7px 8px 0 10px; }
.actions a { display: flex; align-items: center; gap: 5px; margin-right: auto; color: #4a90f5; text-decoration: none; }
.actions button { width: 77px; height: 30px; border: 1px solid #adadad; background: #e1e1e1; }
.actions .primary { width: 86px; margin-right: 29px; border: 2px solid #0078d7; }
.resize { position: absolute; right: 2px; bottom: 2px; }

.pointer-arrow { position: absolute; filter: drop-shadow(3px 3px 2px #0007); }
.a1 { left: 336px; top: 304px; }
.a2 { left: 816px; top: 304px; }

.toast { position: absolute; z-index: 3; right: 6px; bottom: 7px; width: 269px; height: 75px; background: #1c202b; box-shadow: 0 0 3px #0009; color: #fff; }
.shield { position: absolute; left: 17px; top: -10px; border-radius: 50%; box-shadow: 0 0 3px #000a; }
.t-main { margin: 8px 0 0 73px; font-size: 13px; line-height: 20px; }
.t-main b { font-weight: 400; color: #fbdc1f; }
.t-foot { display: flex; align-items: center; justify-content: space-between; margin-top: 14px; padding: 0 9px 0 16px; color: #6d717c; }
.t-foot button { width: 72px; height: 21px; background: #0cc77a; color: #fff; }
.t-close { position: absolute; right: 4px; top: 4px; color: #8c909b; }
.mark { position: absolute; left: 116px; top: 31px; display: flex; align-items: flex-start; opacity: 0.75; pointer-events: none; }
.mark strong, .mark em { display: block; font-style: normal; white-space: nowrap; }
.mark strong { font-size: 21px; line-height: 24px; color: #1c6bb0; }
.mark em { font: 700 16px/18px "Liberation Sans", sans-serif; color: #248a3c; }
</style>
